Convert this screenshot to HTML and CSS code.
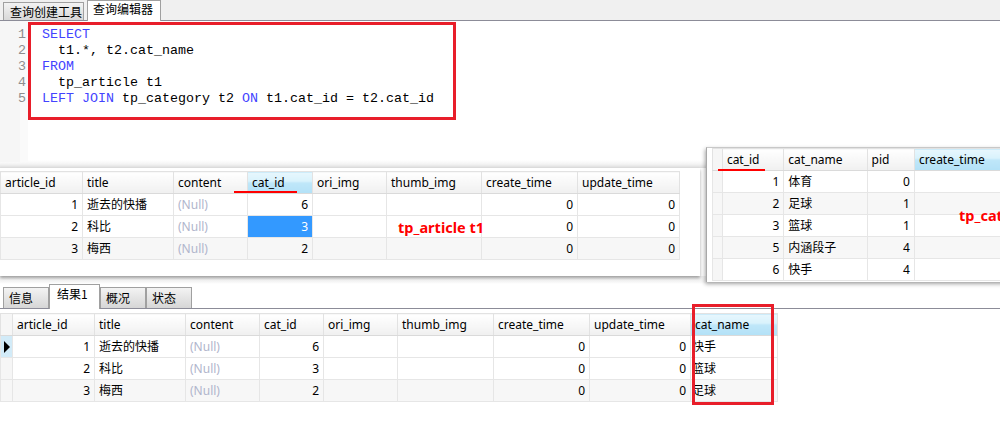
FILE: index.html
```html
<!DOCTYPE html>
<html>
<head>
<meta charset="utf-8">
<link rel="stylesheet" href="styles.css">
</head>
<body>
<div class="app">
  <div class="tabbar">
    <div class="tab">查询创建工具</div>
    <div class="tab active">查询编辑器</div>
  </div>

  <div class="editor">
    <div class="gutter">
      <div class="ln">1</div><div class="ln">2</div><div class="ln">3</div><div class="ln">4</div><div class="ln">5</div>
    </div>
    <div class="strip"></div>
    <div class="code">
      <div class="line"><span class="kw">SELECT</span></div>
      <div class="line">  t1.*, t2.cat_name</div>
      <div class="line"><span class="kw">FROM</span></div>
      <div class="line">  tp_article t1</div>
      <div class="line"><span class="kw">LEFT JOIN</span> tp_category t2 <span class="kw">ON</span> t1.cat_id = t2.cat_id</div>
    </div>
    <div class="mark editor-mark"></div>
  </div>

  <div class="shot shot-article">
    <table class="grid article-grid">
      <colgroup>
        <col class="w82"><col class="w91"><col class="w74"><col class="w65"><col class="w74"><col class="w95"><col class="w96"><col class="w102">
      </colgroup>
      <thead>
        <tr><th>article_id</th><th>title</th><th>content</th><th class="hl">cat_id</th><th>ori_img</th><th>thumb_img</th><th>create_time</th><th>update_time</th></tr>
      </thead>
      <tbody>
        <tr><td class="num">1</td><td>逝去的快播</td><td class="null">(Null)</td><td class="num">6</td><td></td><td></td><td class="num">0</td><td class="num">0</td></tr>
        <tr><td class="num">2</td><td>科比</td><td class="null">(Null)</td><td class="num sel">3</td><td></td><td></td><td class="num">0</td><td class="num">0</td></tr>
        <tr class="alt"><td class="num">3</td><td>梅西</td><td class="null">(Null)</td><td class="num">2</td><td></td><td></td><td class="num">0</td><td class="num">0</td></tr>
      </tbody>
    </table>
    <div class="uline uline-article"></div>
    <div class="label label-article">tp_article t1</div>
  </div>

  <div class="restabs">
    <div class="rtab">信息</div>
    <div class="rtab active">结果1</div>
    <div class="rtab">概况</div>
    <div class="rtab">状态</div>
  </div>

  <div class="results">
    <table class="grid result-grid">
      <colgroup>
        <col class="w12"><col class="w82"><col class="w91"><col class="w74"><col class="w64"><col class="w74"><col class="w96"><col class="w96"><col class="w101"><col class="w87">
      </colgroup>
      <thead>
        <tr><th class="ind"></th><th>article_id</th><th>title</th><th>content</th><th>cat_id</th><th>ori_img</th><th>thumb_img</th><th>create_time</th><th>update_time</th><th class="hl">cat_name</th></tr>
      </thead>
      <tbody>
        <tr><td class="ind cur"><span class="tri"></span></td><td class="num">1</td><td>逝去的快播</td><td class="null">(Null)</td><td class="num">6</td><td></td><td></td><td class="num">0</td><td class="num">0</td><td class="tight">快手</td></tr>
        <tr><td class="ind"></td><td class="num">2</td><td>科比</td><td class="null">(Null)</td><td class="num">3</td><td></td><td></td><td class="num">0</td><td class="num">0</td><td class="tight">篮球</td></tr>
        <tr class="alt"><td class="ind"></td><td class="num">3</td><td>梅西</td><td class="null">(Null)</td><td class="num">2</td><td></td><td></td><td class="num">0</td><td class="num">0</td><td class="tight">足球</td></tr>
      </tbody>
    </table>
    <div class="mark result-mark"></div>
  </div>

  <div class="shot shot-category">
    <table class="grid cat-grid">
      <colgroup>
        <col class="w10"><col class="w64"><col class="w86"><col class="w50"><col class="w100">
      </colgroup>
      <thead>
        <tr><th class="ind"></th><th>cat_id</th><th>cat_name</th><th>pid</th><th class="hl">create_time</th></tr>
      </thead>
      <tbody>
        <tr><td class="ind"></td><td class="num">1</td><td>体育</td><td class="num">0</td><td></td></tr>
        <tr class="alt"><td class="ind"></td><td class="num">2</td><td>足球</td><td class="num">1</td><td></td></tr>
        <tr><td class="ind"></td><td class="num">3</td><td>篮球</td><td class="num">1</td><td></td></tr>
        <tr class="alt"><td class="ind"></td><td class="num">5</td><td>内涵段子</td><td class="num">4</td><td></td></tr>
        <tr><td class="ind"></td><td class="num">6</td><td>快手</td><td class="num">4</td><td></td></tr>
      </tbody>
    </table>
    <div class="uline uline-cat"></div>
    <div class="label label-cat">tp_cat</div>
  </div>
</div>
</body>
</html>
```

FILE: styles.css
```css
html, body {
  margin: 0;
  padding: 0;
  background: #ffffff;
}

.app {
  position: relative;
  width: 1000px;
  height: 438px;
  overflow: hidden;
  font-family: "Noto Sans", "Noto Sans CJK SC", sans-serif;
  font-size: 12px;
  color: #000;
}

/* top tab bar */
.tabbar {
  height: 20px;
  background: #f0f0f0;
  border-bottom: 1px solid #8c8c98;
  display: flex;
  align-items: flex-end;
  padding-left: 3px;
  gap: 3px;
}

.tab {
  box-sizing: border-box;
  height: 18px;
  width: 81px;
  border: 1px solid #a0a0a0;
  border-bottom: none;
  background: linear-gradient(#f3f3f3, #d8d8d8);
  font-family: "Noto Sans CJK SC", sans-serif;
  line-height: 17px;
  padding-left: 6px;
}

.tab.active {
  height: 21px;
  width: 74px;
  background: #ffffff;
  margin-bottom: -1px;
  line-height: 15px;
  padding-left: 5px;
}

/* editor */
.editor {
  position: relative;
  height: 147px;
  display: flex;
  background: linear-gradient(to bottom, #ffffff 0, #ffffff 139px, #f4f4f4 143px, #dcdcdc 147px);
}

.strip {
  position: absolute;
  left: 0;
  top: 0;
  width: 20px;
  height: 141px;
  background: #f6f6f6;
}

.strip::after {
  content: "";
  position: absolute;
  left: 20px;
  top: 0;
  width: 8px;
  height: 141px;
  background: #fafafa;
}

.gutter {
  position: relative;
  z-index: 1;
  box-sizing: border-box;
  width: 26px;
  padding-top: 6px;
  font-family: "Liberation Mono", monospace;
  font-size: 13.33px;
  line-height: 16px;
  color: #8e8e8e;
  text-align: right;
}

.code {
  position: relative;
  z-index: 1;
  padding-top: 6px;
  padding-left: 16px;
  font-family: "Liberation Mono", monospace;
  font-size: 13.33px;
  line-height: 16px;
  color: #000;
}

.line {
  white-space: pre;
  height: 16px;
}

.kw {
  color: #4343ff;
}

.mark {
  position: absolute;
  z-index: 2;
  box-sizing: border-box;
  border: 3px solid #e81e2a;
}

.editor-mark {
  left: 28px;
  top: 1px;
  width: 428px;
  height: 98px;
}

/* screenshot pieces */
.shot {
  position: relative;
  background: #ffffff;
}

.shot-article {
  height: 105px;
  padding-top: 3px;
  box-shadow: 0 2px 3px rgba(0, 0, 0, 0.35);
  width: 700px;
}

.shot-category {
  position: absolute;
  left: 706px;
  top: 147px;
  width: 300px;
  height: 134px;
  border-left: 1px solid #a8a8a8;
  border-top: 1px solid #c8c8c8;
  box-shadow: -1px 2px 4px rgba(0, 0, 0, 0.35);
  padding-left: 5px;
}

/* grids */
.grid {
  border-collapse: collapse;
  table-layout: fixed;
  font-family: "Noto Sans", "Noto Sans CJK SC", sans-serif;
  font-size: 12px;
}

.grid th,
.grid td {
  box-sizing: border-box;
  height: 22px;
  padding: 0 3px 0 4px;
  border: 1px solid #e6e6e6;
  white-space: nowrap;
  overflow: hidden;
  font-weight: normal;
  text-align: left;
  line-height: 20px;
}

.grid th {
  background: linear-gradient(#ffffff, #f0f0f0);
  border-color: #e2e2e2 #e2e2e2 #dadada #e2e2e2;
}

.grid th.hl {
  background: linear-gradient(#e7f7fd 0%, #d9f2fc 42%, #bfe7f9 50%, #b3e1f7 100%);
}

.grid td.num {
  text-align: right;
  padding-right: 4px;
}

.grid td.null {
  color: #b0b5cc;
}

.grid td.sel {
  background: #3399ff;
  color: #ffffff;
}

.grid td.tight {
  padding-left: 1px;
}

.grid tr.alt td {
  background-color: #f7f7f7;
}

.grid .ind {
  padding: 0;
  background: #f6f6f6;
}

.grid td.ind.cur {
  background: #d2ebf8;
}

.tri {
  display: block;
  width: 0;
  height: 0;
  margin-left: 3px;
  border-left: 6px solid #000;
  border-top: 6px solid transparent;
  border-bottom: 6px solid transparent;
}

.w10 { width: 11px; }
.w12 { width: 12px; }
.w50 { width: 50px; }
.w64 { width: 64px; }
.w65 { width: 65px; }
.w74 { width: 74px; }
.w82 { width: 82px; }
.w86 { width: 86px; }
.w87 { width: 87px; }
.w91 { width: 91px; }
.w95 { width: 95px; }
.w96 { width: 96px; }
.w100 { width: 100px; }
.w101 { width: 101px; }
.w102 { width: 102px; }

.uline {
  position: absolute;
  height: 2px;
  background: #ff0000;
}

.uline-article {
  left: 234px;
  top: 23px;
  width: 63px;
}

.uline-cat {
  left: 11px;
  top: 21px;
  width: 47px;
}

.label {
  position: absolute;
  color: #ff0000;
  font-family: "Noto Sans", "Noto Sans CJK SC", sans-serif;
  font-weight: bold;
  font-size: 14.5px;
  line-height: 18px;
}

.label-article {
  left: 398px;
  top: 50px;
}

.label-cat {
  left: 252px;
  top: 58px;
}

/* result tabs */
.restabs {
  height: 33px;
  box-sizing: border-box;
  border-bottom: 1px solid #8c8c98;
  display: flex;
  align-items: flex-end;
  padding-left: 3px;
  background: linear-gradient(to bottom, #f0f0f0 0, #f6f6f6 6px, #ffffff 8px);
}

.rtab {
  box-sizing: border-box;
  height: 21px;
  width: 46px;
  border: 1px solid #a0a0a0;
  border-bottom: none;
  background: linear-gradient(#f3f3f3, #d6d6d6);
  font-family: "Noto Sans CJK SC", sans-serif;
  line-height: 20px;
  padding-left: 5px;
}

.rtab.active {
  height: 25px;
  width: 51px;
  background: #ffffff;
  margin-bottom: -1px;
  line-height: 18px;
  padding-left: 7px;
}

.results {
  position: relative;
  padding-top: 4px;
}

.result-mark {
  left: 692px;
  top: -5px;
  width: 82px;
  height: 101px;
}
```
